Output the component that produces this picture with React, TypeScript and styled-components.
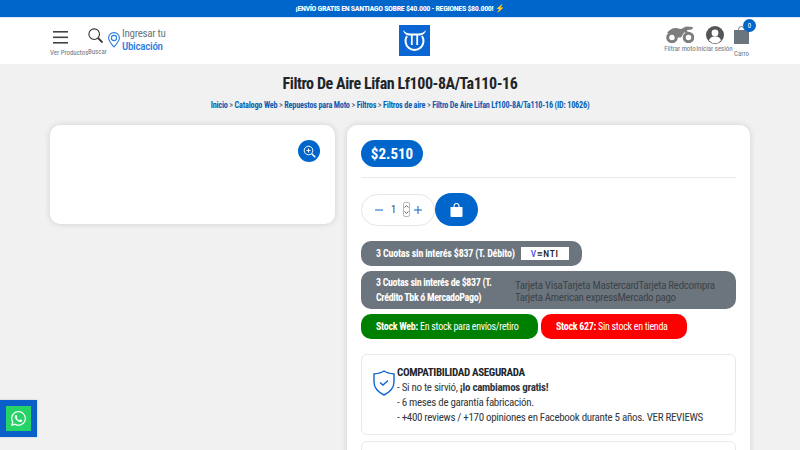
import React from "react";
import styled, { createGlobalStyle } from "styled-components";
import { FaWhatsapp } from "react-icons/fa";

const Global = createGlobalStyle`
  html, body { margin: 0; padding: 0; height: 100%; overflow: hidden; background: #f1f1f1; }
  * { box-sizing: border-box; }
  body { font-family: "Roboto", "Liberation Sans", sans-serif; font-stretch: 75%; color: #212529; }
`;
const Page = styled.div`height: 450px; overflow: hidden; display: flex; flex-direction: column;`;
const TopBar = styled.div`
  height: 17px; background: #0066cc; color: #fff; font-size: 8px; font-weight: 700; letter-spacing: -.35px;
  display: flex; align-items: center; justify-content: center; flex: none; white-space: nowrap;
`;
const Header = styled.header`
  height: 47px; flex: none; background: #fff; padding: 0 50px 1px;
  display: grid; grid-template-columns: 349px 31px 1fr; align-items: center;
  border-top: 1px solid #d8e6f7;
`;
const LeftNav = styled.div`display: flex; align-items: flex-start; height: 100%; padding-top: 9px;`;
const RightNav = styled.div`display: flex; align-items: flex-start; justify-content: flex-end; height: 100%; padding-top: 7px;`;
const NavItem = styled.div<{ $w: number }>`
  width: ${p => p.$w}px; display: flex; flex-direction: column; align-items: center; position: relative;
`;
const LeftIconItem = styled.div<{ $w: number; $labelTop: number }>`
  width: ${p => p.$w}px; display: flex; flex-direction: column; align-items: flex-start;
  & > span { margin-top: ${p => p.$labelTop}px; }
`;
const NavLabel = styled.span`font-size: 6.9px; color: #6c757d; line-height: 8px; white-space: nowrap;`;
const IconSlot = styled.div<{ $h: number }>`height: ${p => p.$h}px; display: flex; align-items: flex-start; justify-content: center; padding-top: 1px;`;
const BurgerSlot = styled.div`height: 14px; padding: 2px 0 0 3px;`;
const SearchSlot = styled.div`height: 16px; padding-top: 1px;`;
const Location = styled.div`display: flex; align-items: flex-start; gap: 2px; margin-top: -1px;`;
const PinSlot = styled.div`padding-top: 6px;`;
const LocText = styled.div`font-size: 11px; line-height: 13px; color: #6c757d; letter-spacing: -.28px; padding-top: 1px;`;
const LocStrong = styled.div`color: #2a7de1; font-weight: 500;`;
const Badge = styled.span`
  position: absolute; top: -6px; right: -6px; width: 13px; height: 13px; border-radius: 50%;
  background: #0066cc; color: #fff; font-size: 7px; display: flex; align-items: center; justify-content: center;
`;
const Logo = styled.div`
  width: 31px; height: 31px; background: #0a66d2; display: flex; align-items: center; justify-content: center;
`;
const Main = styled.main`flex: 1; padding: 0 50px;`;
const Title = styled.h1`
  font-size: 16px; font-weight: 700; margin: 10px 0 0; text-align: center; line-height: 19px; color: #212529; letter-spacing: -.42px;
`;
const Crumbs = styled.div`
  text-align: center; font-size: 8.2px; font-weight: 700; color: #0a5fb4; margin-top: 7px; line-height: 11px; letter-spacing: -.2px;
`;
const Sep = styled.span`color: #555; font-weight: 400;`;
const Columns = styled.div`display: grid; grid-template-columns: 285px 403px; column-gap: 12px; margin-top: 14px; align-items: start;`;
const GalleryCard = styled.section`
  height: 99px; background: #fff; border-radius: 10px; box-shadow: 0 0 6px rgba(0,0,0,.14);
  display: flex; justify-content: flex-end; padding: 15px;
`;
const ZoomBtn = styled.button`
  width: 22px; height: 22px; border: 0; border-radius: 50%; background: #0066cc; padding: 0;
  display: flex; align-items: center; justify-content: center;
`;
const InfoCard = styled.section`
  background: #fff; border-radius: 10px; box-shadow: 0 0 6px rgba(0,0,0,.14); padding: 15px 14px; height: 400px;
`;
const Price = styled.div`
  width: 62px; height: 27px; border-radius: 14px; background: #0066cc; color: #fff; font-weight: 700; font-size: 15px;
  display: flex; align-items: center; justify-content: center;
`;
const Rule = styled.hr`border: 0; border-top: 1px solid #e9e9e9; margin: 10px 0 15px;`;
const BuyRow = styled.div`display: flex; align-items: center;`;
const Qty = styled.div`
  width: 74px; height: 32px; border: 1px solid #e6e6e6; border-radius: 16px; display: flex; align-items: center;
  padding-left: 13px; color: #0a66c2;
`;
const QtyValue = styled.span`color: #444; font-size: 10.5px; margin-left: 8px; width: 9px;`;
const Spinner = styled.span`
  width: 7px; height: 15px; border: 1px solid #bbb; border-radius: 2px; margin-left: 3px; margin-right: 4px; display: flex; flex-direction: column;
  align-items: center; justify-content: space-around;
`;
const AddBtn = styled.button`
  width: 43px; height: 33px; border: 0; border-radius: 17px; background: #0066cc; padding: 0;
  display: flex; align-items: center; justify-content: center;
`;
const Pill = styled.div<{ $bg: string; $w: number; $h: number }>`
  width: ${p => p.$w}px; height: ${p => p.$h}px; background: ${p => p.$bg}; border-radius: 10px;
  color: #fff; font-size: 10px; letter-spacing: -.28px; display: flex; align-items: center; flex: none; white-space: nowrap;
  padding-left: 15px;
`;
const DebitPill = styled(Pill)`margin-top: 15px; font-weight: 700; gap: 6px; letter-spacing: -.2px;`;
const Venti = styled.span`
  width: 48px; height: 13px; background: #fff; color: #222; font-size: 9.5px; font-weight: 500;
  display: flex; align-items: center; justify-content: center; letter-spacing: .8px;
`;
const VentiV = styled.span`color: #4b55e8;`;
const CreditPill = styled(Pill)`margin-top: 5px; letter-spacing: -.35px;`;
const CreditText = styled.div`width: 139px; font-weight: 700; line-height: 15px; white-space: normal;`;
const Cards = styled.div`
  color: #3d4349; font-size: 11px; line-height: 12px; width: 220px; margin-top: 4px; letter-spacing: -.32px; white-space: normal;
`;
const StockRow = styled.div`display: flex; gap: 3px; margin-top: 5px;`;
const Notice = styled.div`
  margin-top: 15px; height: 81px; border: 1px solid #e9e9e9; border-radius: 6px;
  padding: 10px 11px; display: flex; align-items: flex-start;
`;
const ShieldSlot = styled.div`width: 24px; padding-top: 5px; flex: none;`;
const NoticeText = styled.div`font-size: 11px; line-height: 15px; color: #33383d; white-space: nowrap; letter-spacing: -.31px;`;
const NoticeTitle = styled.div`font-weight: 700; color: #212529; letter-spacing: -.35px;`;
const NextNotice = styled.div`margin-top: 6px; height: 40px; border: 1px solid #e9e9e9; border-radius: 6px;`;
const Whats = styled.div`
  position: fixed; left: 0; top: 400px; width: 37px; height: 37px; background: #0a5fc8;
  display: flex; align-items: center; justify-content: center; box-shadow: 0 0 2px rgba(0,0,0,.2);
`;
const WhatsInner = styled.div`
  width: 25px; height: 25px; background: #25d366; color: #fff; display: flex; align-items: center; justify-content: center; font-size: 17px;
`;

const Chevron = ({ up }: { up?: boolean }) => (
  <svg width="5" height="3" viewBox="0 0 5 3" fill="none" stroke="#444" strokeWidth=".8">
    <path d={up ? "M.5 2.5 2.5.7l2 1.8" : "M.5.5l2 1.8 2-1.8"} />
  </svg>
);

export default function App() {
  return (
    <Page>
      <Global />
      <TopBar>¡ENVÍO GRATIS EN SANTIAGO SOBRE $40.000 - REGIONES $80.000! ⚡</TopBar>
      <Header>
        <LeftNav>
          <LeftIconItem $w={38} $labelTop={8}>
            <BurgerSlot>
              <svg width="15" height="13" viewBox="0 0 15 13" fill="#444"><rect width="15" height="1.6" y="0" /><rect width="15" height="1.6" y="5.5" /><rect width="15" height="1.6" y="11" /></svg>
            </BurgerSlot>
            <NavLabel>Ver Productos</NavLabel>
          </LeftIconItem>
          <LeftIconItem $w={20} $labelTop={5}>
            <SearchSlot>
              <svg width="15" height="15" viewBox="0 0 15 15" fill="none" stroke="#333" strokeWidth="1.1"><circle cx="6.2" cy="6.2" r="5.3" /><path d="M10 10l4.500 4.500" strokeWidth="1.8" /></svg>
            </SearchSlot>
            <NavLabel>Buscar</NavLabel>
          </LeftIconItem>
          <Location>
            <PinSlot>
              <svg width="12" height="16" viewBox="0 0 12 16" fill="none" stroke="#2a7de1" strokeWidth="1.1"><path d="M6 15C3 11.500.6 9 .6 6a5.400 5.400 0 0 1 10.800 0C11.400 9 9 11.500 6 15Z" /><circle cx="6" cy="6" r="2.600" /></svg>
            </PinSlot>
            <LocText>Ingresar tu<LocStrong>Ubicación</LocStrong></LocText>
          </Location>
        </LeftNav>
        <Logo>
          <svg width="25" height="23" viewBox="0 0 25 23" fill="none" stroke="#fff">
            <path d="M5 7a9 9 0 1 0 15 0" strokeWidth="2" />
            <path d="M1 1c2 2.500 4.500 3.500 7.500 3.500h8c3 0 5.500-1 7.500-3.500-.5 2.800-2.500 5-5.500 5.500H6.500C3.500 6 1.500 3.800 1 1Z" fill="#fff" stroke="none" />
            <path d="M9.800 6v10M15.200 6v10" strokeWidth="1.800" />
          </svg>
        </Logo>
        <RightNav>
          <NavItem $w={32}>
            <IconSlot $h={20}>
              <svg width="28" height="17" viewBox="0 0 28 17" fill="#7d7d7d">
                <circle cx="6" cy="11.500" r="4.300" fill="none" stroke="#7d7d7d" strokeWidth="3" />
                <circle cx="22.500" cy="11.500" r="4.300" fill="none" stroke="#7d7d7d" strokeWidth="3" />
                <path d="M1 7c2-3 5-5 9-5 2 0 3 1 5 1l5-2.500 7 .5-1 2.500-5 .5 1 3-4-.5-3 5H9L7 7Z" />
              </svg>
            </IconSlot>
            <NavLabel>Filtrar moto</NavLabel>
          </NavItem>
          <NavItem $w={37}>
            <IconSlot $h={20}>
              <svg width="18" height="18" viewBox="0 0 18 18"><circle cx="9" cy="9" r="9" fill="#555" /><circle cx="9" cy="7" r="3.400" fill="#fff" /><path d="M3 14.500c1-3.500 3.500-4 6-4s5 .5 6 4a8 8 0 0 1-12 0Z" fill="#fff" /></svg>
            </IconSlot>
            <NavLabel>Iniciar sesión</NavLabel>
          </NavItem>
          <NavItem $w={17}>
            <IconSlot $h={25}>
              <svg width="15" height="18" viewBox="0 0 15 18"><path d="M0 4h15v14H0Z" fill="#6c757d" /><path d="M4.500 6V3.500a3 3 0 0 1 6 0V6" fill="none" stroke="#6c757d" strokeWidth="1" /></svg>
            </IconSlot>
            <NavLabel>Carro</NavLabel>
            <Badge>0</Badge>
          </NavItem>
        </RightNav>
      </Header>
      <Main>
        <Title>Filtro De Aire Lifan Lf100-8A/Ta110-16</Title>
        <Crumbs>
          Inicio <Sep>&gt;</Sep> Catalogo Web <Sep>&gt;</Sep> Repuestos para Moto <Sep>&gt;</Sep> Filtros <Sep>&gt;</Sep> Filtros de aire <Sep>&gt;</Sep> Filtro De Aire Lifan Lf100-8A/Ta110-16 (ID: 10626)
        </Crumbs>
        <Columns>
          <GalleryCard>
            <ZoomBtn aria-label="Ampliar">
              <svg width="13" height="13" viewBox="0 0 13 13" fill="none" stroke="#fff" strokeWidth="1"><circle cx="5.500" cy="5.500" r="4.300" /><path d="M8.700 8.700l3.600 3.600" strokeWidth="1.600" /><path d="M3.500 5.500h4M5.500 3.500v4" /></svg>
            </ZoomBtn>
          </GalleryCard>
          <InfoCard>
            <Price>$2.510</Price>
            <Rule />
            <BuyRow>
              <Qty>
                <svg width="8" height="8" viewBox="0 0 8 8" stroke="#0a66c2" strokeWidth="1"><path d="M0 4h8" /></svg>
                <QtyValue>1</QtyValue>
                <Spinner><Chevron up /><Chevron /></Spinner>
                <svg width="8" height="8" viewBox="0 0 8 8" stroke="#0a66c2" strokeWidth="1"><path d="M0 4h8M4 0v8" /></svg>
              </Qty>
              <AddBtn aria-label="Agregar">
                <svg width="13" height="14" viewBox="0 0 13 14"><path d="M.5 4h12v9a1 1 0 0 1-1 1h-10a1 1 0 0 1-1-1Z" fill="#fff" /><path d="M4 5V3a2.500 2.500 0 0 1 5 0v2" fill="none" stroke="#fff" strokeWidth="1.100" /></svg>
              </AddBtn>
            </BuyRow>
            <DebitPill $bg="#6c757d" $w={221} $h={25}>
              3 Cuotas sin interés $837 (T. Débito)
              <Venti><VentiV>V</VentiV>≡NTI</Venti>
            </DebitPill>
            <CreditPill $bg="#6c757d" $w={375} $h={38}>
              <CreditText>3 Cuotas sin interés de $837 (T. Crédito Tbk ó MercadoPago)</CreditText>
              <Cards>Tarjeta VisaTarjeta MastercardTarjeta Redcompra Tarjeta American expressMercado pago</Cards>
            </CreditPill>
            <StockRow>
              <Pill $bg="#008000" $w={177} $h={25}><b>Stock Web:</b>&nbsp;En stock para envíos/retiro</Pill>
              <Pill $bg="#ff0000" $w={146} $h={25}><b>Stock 627:</b>&nbsp;Sin stock en tienda</Pill>
            </StockRow>
            <Notice>
              <ShieldSlot>
                <svg width="22" height="26" viewBox="0 0 22 26" fill="none" stroke="#0a66d2" strokeWidth="1.400"><path d="M11 1c3 2 6 2.500 10 3v8c0 6-4 10-10 13C5 22 1 18 1 12V4c4-.5 7-1 10-3Z" /><path d="M7 12.500l3 2.500 5-4.500" /></svg>
              </ShieldSlot>
              <NoticeText>
                <NoticeTitle>COMPATIBILIDAD ASEGURADA</NoticeTitle>
                - Si no te sirvió, <b>¡lo cambiamos gratis!</b><br />
                - 6 meses de garantía fabricación.<br />
                - +400 reviews / +170 opiniones en Facebook durante 5 años. VER REVIEWS
              </NoticeText>
            </Notice>
            <NextNotice />
          </InfoCard>
        </Columns>
      </Main>
      <Whats><WhatsInner><FaWhatsapp /></WhatsInner></Whats>
    </Page>
  );
}
